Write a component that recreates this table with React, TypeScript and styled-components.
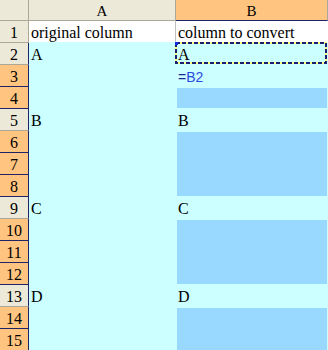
import React from "react";
import styled, { createGlobalStyle } from "styled-components";

const GlobalStyle = createGlobalStyle`
  html, body {
    margin: 0;
    padding: 0;
    background: #fff;
  }
  body {
    width: 328px;
    height: 350px;
    overflow: hidden;
  }
`;

const C = {
  face: "#ECE9D8",
  faceLine: "#ACA899",
  pick: "#FFC580",
  pickLine: "#1E2466",
  grid: "#C0C0C0",
  cyan: "#CCFFFF",
  sel: "#99D8FF",
};

const Sheet = styled.div`
  display: grid;
  grid-template-columns: 29px 147px 152px;
  grid-template-rows: 21px;
  grid-auto-rows: 22px;
  font-family: "Liberation Serif", "Times New Roman", serif;
  font-size: 16px;
  color: #000;
  & > * {
    box-sizing: border-box;
  }
`;

const Corner = styled.div`
  background: ${C.face};
  border-right: 1px solid ${C.faceLine};
  border-bottom: 1px solid ${C.faceLine};
`;

const ColHead = styled.div<{ $active?: boolean }>`
  display: flex;
  justify-content: center;
  padding-top: 2px;
  line-height: 18px;
  font-size: 15px;
  background: ${(p) => (p.$active ? C.pick : C.face)};
  border-right: 1px solid ${C.faceLine};
  border-bottom: 1px solid ${(p) => (p.$active ? C.pickLine : C.faceLine)};
`;

const RowHead = styled.div<{ $active?: boolean; $top?: boolean }>`
  display: flex;
  justify-content: center;
  padding-top: 3px;
  line-height: 18px;
  background: ${(p) => (p.$active ? C.pick : C.face)};
  border-right: 1px solid ${(p) => (p.$top ? C.faceLine : C.pickLine)};
  border-bottom: 1px solid ${(p) => (p.$active ? C.pickLine : C.faceLine)};
`;

const Cell = styled.div<{ $plain?: boolean; $divider?: boolean }>`
  position: relative;
  padding: 3px 0 0 2px;
  line-height: 18px;
  white-space: nowrap;
  overflow: visible;
  background: ${(p) => (p.$plain ? "#fff" : C.cyan)};
  border-right: 1px solid ${(p) => (p.$divider ? C.grid : "transparent")};
  border-bottom: 1px solid ${C.cyan};
`;

// selected block in column B, inset from the surrounding cyan fill
const Picked = styled.div<{ $first?: boolean; $last?: boolean }>`
  background: ${C.sel};
  border-left: 1px solid ${C.cyan};
  border-right: 1px solid ${C.cyan};
  border-top: ${(p) => (p.$first ? 1 : 0)}px solid ${C.cyan};
  border-bottom: ${(p) => (p.$last ? 1 : 0)}px solid ${C.cyan};
`;

const Formula = styled.span`
  font-family: "Liberation Sans", Arial, sans-serif;
  font-size: 14px;
  color: #1B2A8C;
  & > b {
    font-weight: normal;
    color: #2A4BE0;
  }
`;

const Marquee = styled.svg`
  position: absolute;
  left: -1px;
  top: -1px;
  pointer-events: none;
`;

const CopyMarquee = () => (
  <Marquee width={153} height={23} viewBox="0 0 153 23">
    <rect x={1} y={1} width={150} height={20} fill="none" stroke="#FFFF80" strokeWidth={2} />
    <rect
      x={1}
      y={1}
      width={150}
      height={20}
      fill="none"
      stroke="#1A1F70"
      strokeWidth={2}
      strokeDasharray="4 2"
    />
    <rect x={0} y={0} width={3} height={3} fill="#1030E0" />
  </Marquee>
);

type Row = {
  a?: string;
  b?: string;
  pick?: "first" | "last" | "mid" | "only";
  active?: boolean;
};

const rows: Row[] = [
  { a: "original column", b: "column to convert" },
  { a: "A", b: "A" },
  { active: true },
  { active: true, pick: "only" },
  { a: "B", b: "B" },
  { active: true, pick: "first" },
  { active: true, pick: "mid" },
  { active: true, pick: "last" },
  { a: "C", b: "C" },
  { active: true, pick: "first" },
  { active: true, pick: "mid" },
  { active: true, pick: "last" },
  { a: "D", b: "D" },
  { active: true, pick: "first" },
  { active: true, pick: "last" },
];

export default function App() {
  return (
    <>
      <GlobalStyle />
      <Sheet>
        <Corner />
        <ColHead>A</ColHead>
        <ColHead $active>B</ColHead>
        {rows.map((r, i) => {
          const n = i + 1;
          const top = n === 1;
          return (
            <React.Fragment key={n}>
              <RowHead $active={r.active} $top={top}>
                {n}
              </RowHead>
              <Cell $plain={top} $divider={top}>
                {r.a}
              </Cell>
              {r.pick ? (
                <Picked
                  $first={r.pick === "first" || r.pick === "only"}
                  $last={r.pick === "last" || r.pick === "only"}
                />
              ) : (
                <Cell $plain={top}>
                  {n === 3 ? (
                    <Formula>
                      =<b>B2</b>
                    </Formula>
                  ) : (
                    r.b
                  )}
                  {n === 2 && <CopyMarquee />}
                </Cell>
              )}
            </React.Fragment>
          );
        })}
      </Sheet>
    </>
  );
}
